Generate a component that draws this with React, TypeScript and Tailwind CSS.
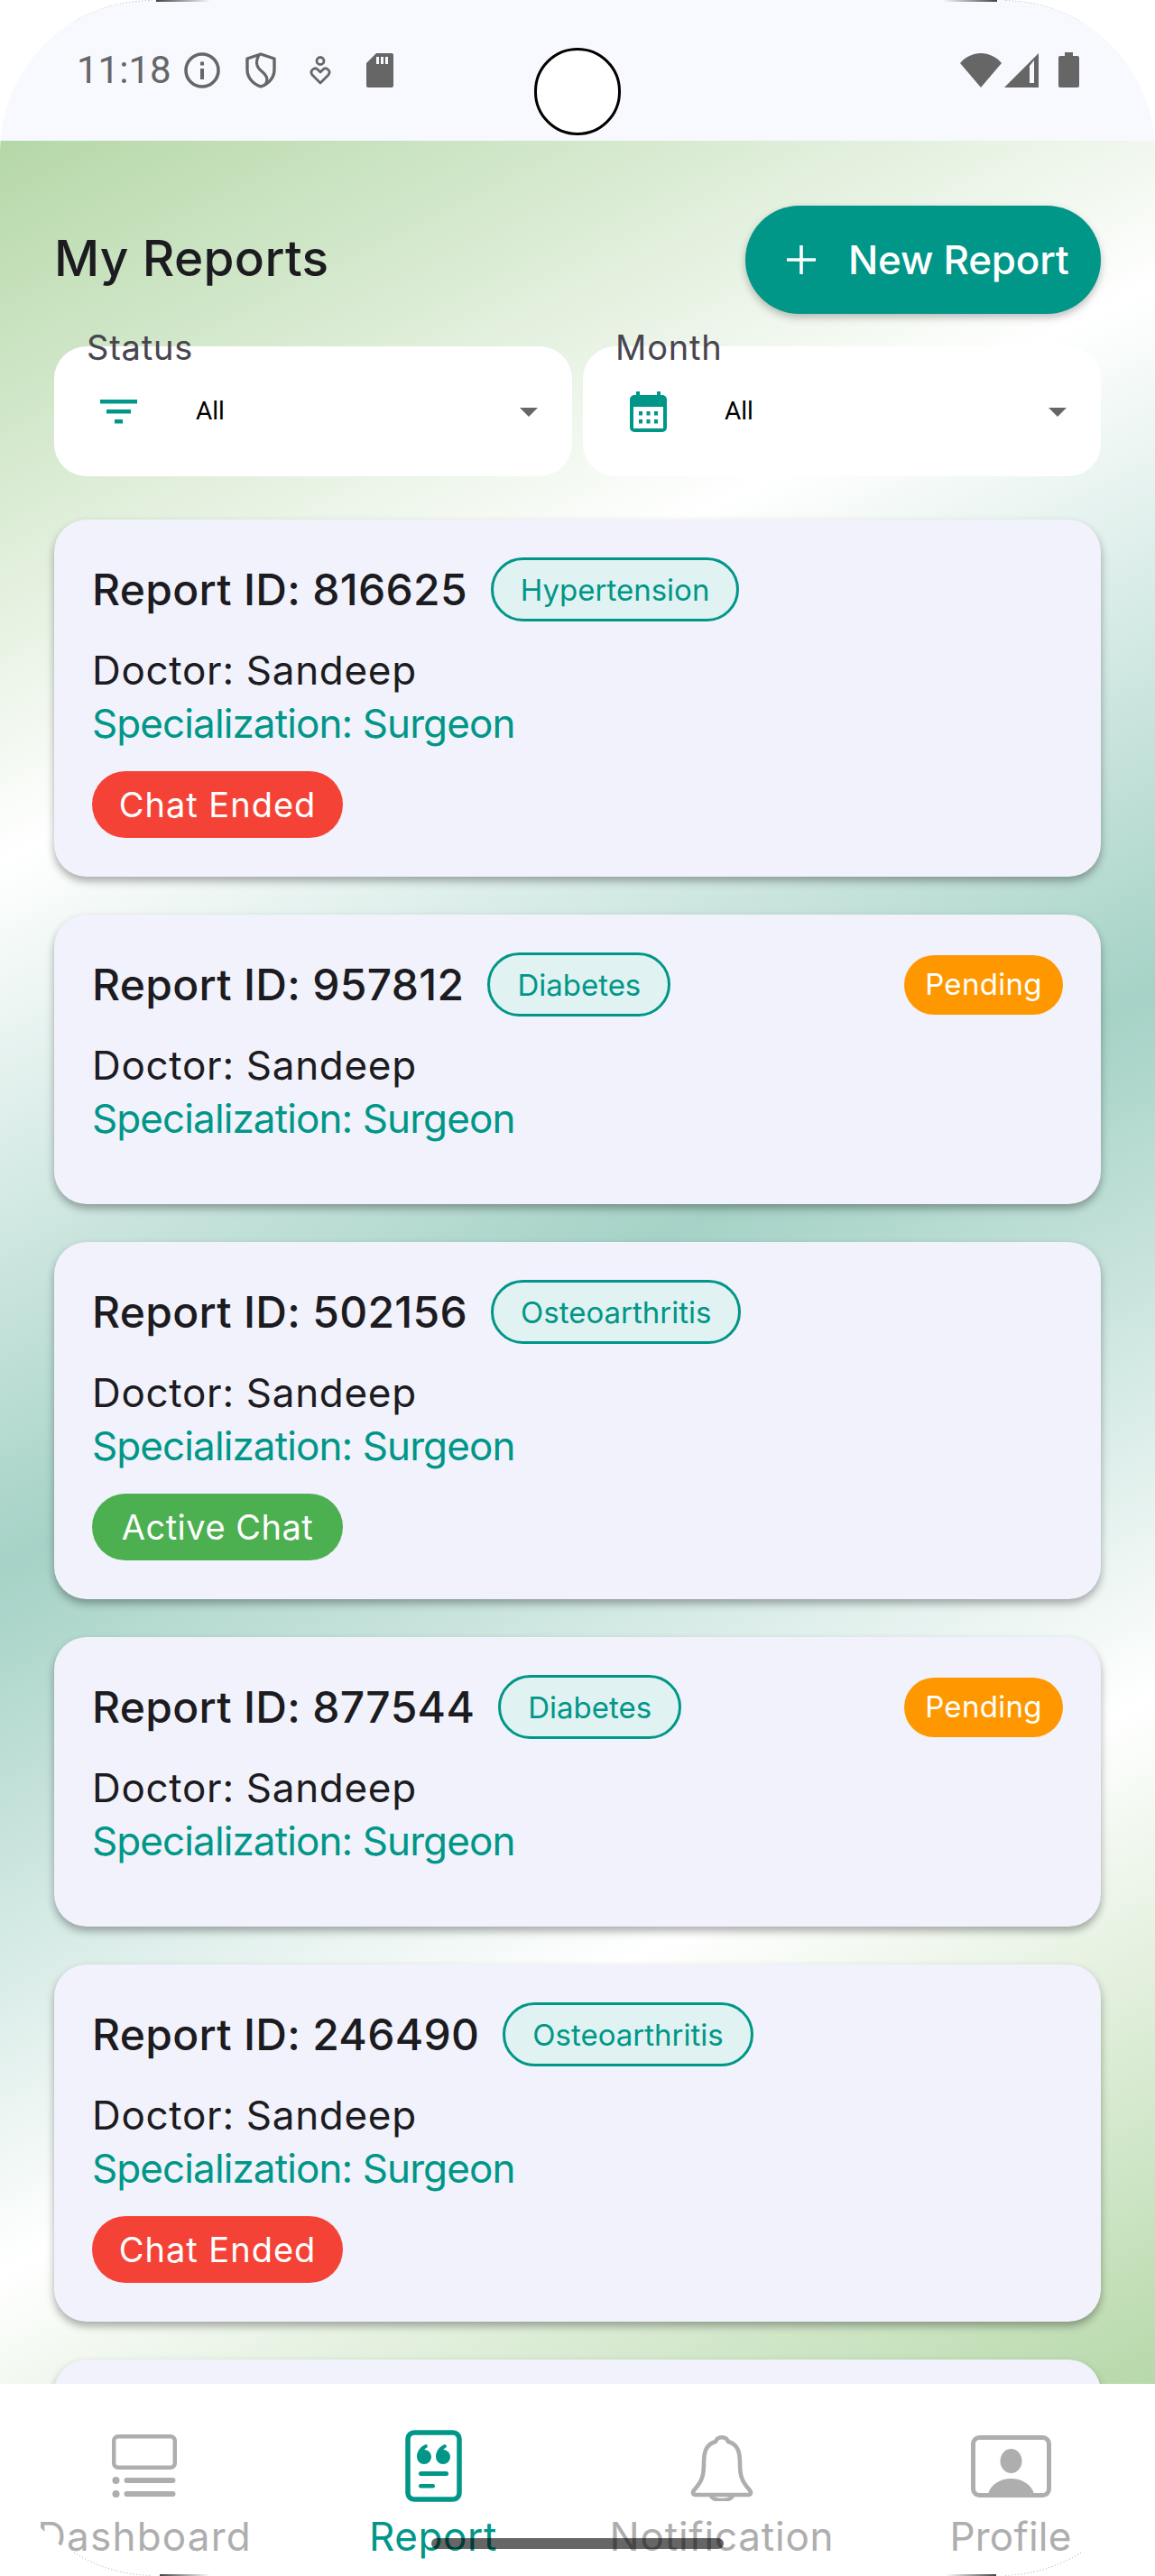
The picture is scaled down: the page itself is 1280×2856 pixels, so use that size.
import React from "react";

const teal = "#009688";

function Info() {
  return (
    <svg width="40" height="40" viewBox="0 0 40 40" className="shrink-0">
      <ellipse cx="20" cy="20" rx="18" ry="18" fill="none" stroke="#666" strokeWidth="3.6" />
      <rect x="18" y="18" width="4" height="12" fill="#666" />
      <rect x="18" y="10.5" width="4" height="4" fill="#666" />
    </svg>
  );
}
function Shield() {
  return (
    <svg width="34" height="40" viewBox="0 0 34 40" className="shrink-0">
      <path d="M17 2 L32 7 V19 C32 28 26 35 17 38 C8 35 2 28 2 19 V7 Z" fill="none" stroke="#666" strokeWidth="3.4" strokeLinejoin="round" />
      <path d="M15 3 C10 12 13 17 18 21 C23 25 26 29 22 36" fill="none" stroke="#666" strokeWidth="3.2" />
    </svg>
  );
}
function PersonHeart() {
  return (
    <svg width="24" height="33" viewBox="0 0 24 33" className="shrink-0">
      <circle cx="12" cy="5.5" r="4" fill="none" stroke="#666" strokeWidth="2.8" />
      <path d="M12 30 L3 21 C-0.5 16 6 12 9 15 L12 18 L15 15 C18 12 24.5 16 21 21 Z" fill="none" stroke="#666" strokeWidth="2.8" strokeLinejoin="round" />
    </svg>
  );
}
function Sd() {
  return (
    <svg width="30" height="38" viewBox="0 0 30 38" className="shrink-0">
      <path d="M11 0 H28 Q30 0 30 2 V36 Q30 38 28 38 H2 Q0 38 0 36 V11 Z" fill="#666" />
      <rect x="11" y="4" width="3" height="8" fill="#f8f9ff" />
      <rect x="16" y="4" width="3" height="8" fill="#f8f9ff" />
      <rect x="21" y="4" width="3" height="8" fill="#f8f9ff" />
    </svg>
  );
}
function Wifi() {
  return (
    <svg width="46" height="38" viewBox="0 0 46 38" className="shrink-0">
      <path d="M23 38 L0 11 C6 4 14 0 23 0 C32 0 40 4 46 11 Z" fill="#666" />
    </svg>
  );
}
function Signal() {
  return (
    <svg width="38" height="38" viewBox="0 0 38 38" className="shrink-0">
      <path d="M38 0 V38 H0 Z" fill="#666" />
      <path d="M28 14 L33 8 V33 H28 Z" fill="#f8f9ff" />
    </svg>
  );
}
function Battery() {
  return (
    <svg width="23" height="39" viewBox="0 0 23 39" className="shrink-0">
      <path d="M7 0 H16 V4 H21 Q23 4 23 6 V37 Q23 39 21 39 H2 Q0 39 0 37 V6 Q0 4 2 4 H7 Z" fill="#666" />
    </svg>
  );
}
function FilterIcon() {
  return (
    <svg width="41" height="27" viewBox="0 0 41 27" className="shrink-0">
      <rect x="0" y="0" width="41" height="4.5" fill={teal} />
      <rect x="7" y="11" width="27" height="4.5" fill={teal} />
      <rect x="16" y="22" width="9" height="4.5" fill={teal} />
    </svg>
  );
}
function CalendarIcon() {
  return (
    <svg width="41" height="45" viewBox="0 0 41 45" className="shrink-0">
      <rect x="7" y="0" width="4" height="7" fill={teal} />
      <rect x="30" y="0" width="4" height="7" fill={teal} />
      <rect x="0" y="4" width="41" height="41" rx="5" fill={teal} />
      <rect x="4" y="17" width="33" height="24" fill="#fff" />
      {[10, 18.5, 27].map((x) =>
        [22, 31].map((y) => <rect key={x + "-" + y} x={x} y={y} width="4" height="4.5" fill={teal} />)
      )}
    </svg>
  );
}
function Caret() {
  return (
    <svg width="20" height="10" viewBox="0 0 20 10" className="shrink-0">
      <path d="M0 0 H20 L10 10 Z" fill="#666" />
    </svg>
  );
}
function DashboardIcon() {
  const c = "#aeaeae";
  return (
    <svg width="72" height="70" viewBox="0 0 72 70">
      <rect x="2.2" y="2.2" width="67.6" height="34.6" rx="5" fill="none" stroke={c} strokeWidth="4.5" />
      <circle cx="4.5" cy="51" r="4" fill={c} />
      <circle cx="4.5" cy="66" r="4" fill={c} />
      <rect x="13.5" y="48" width="57" height="6" rx="3" fill={c} />
      <rect x="13.5" y="63" width="57" height="6" rx="3" fill={c} />
    </svg>
  );
}
function ReportIcon() {
  return (
    <svg width="63" height="80" viewBox="0 0 63 80">
      <rect x="3" y="3" width="57" height="74" rx="7" fill="none" stroke={teal} strokeWidth="5.5" />
      <circle cx="21" cy="30" r="8" fill={teal} />
      <circle cx="42" cy="30" r="8" fill={teal} />
      <path d="M13 30 C13 23 18 17 24 16 L25 19 C21 21 20 24 20 27 Z" fill={teal} />
      <path d="M34 30 C34 23 39 17 45 16 L46 19 C42 21 41 24 41 27 Z" fill={teal} />
      <rect x="15" y="46" width="33" height="5" rx="2.5" fill={teal} />
      <rect x="15" y="60" width="18" height="4.5" rx="2.2" fill={teal} />
    </svg>
  );
}
function BellIcon() {
  const c = "#aeaeae";
  return (
    <svg width="72" height="78" viewBox="0 0 72 78">
      <path d="M29 12 C18 15 16 24 16 36 C16 50 14 56 5 66 Q2 71 8 71 H64 Q70 71 67 66 C58 56 56 50 56 36 C56 24 54 15 43 12 A7.5 7.5 0 0 0 29 12 Z" fill="none" stroke={c} strokeWidth="4.6" strokeLinejoin="round" />
      <path d="M24 71 C24 79 48 79 48 71" fill="none" stroke={c} strokeWidth="4.6" />
    </svg>
  );
}
function ProfileIcon() {
  const c = "#aeaeae";
  return (
    <svg width="89" height="69" viewBox="0 0 89 69">
      <rect x="2.5" y="2.5" width="84" height="64" rx="7" fill="none" stroke={c} strokeWidth="5" />
      <ellipse cx="44.5" cy="28.5" rx="12" ry="13.5" fill={c} />
      <path d="M19 65 C22 54 33 48 44.5 48 C56 48 67 54 70 65 Z" fill={c} />
    </svg>
  );
}

type R = { id: string; tag: string; status: "ended" | "active" | "pending" };
const reports: R[] = [
  { id: "816625", tag: "Hypertension", status: "ended" },
  { id: "957812", tag: "Diabetes", status: "pending" },
  { id: "502156", tag: "Osteoarthritis", status: "active" },
  { id: "877544", tag: "Diabetes", status: "pending" },
  { id: "246490", tag: "Osteoarthritis", status: "ended" },
  { id: "310472", tag: "Diabetes", status: "pending" },
];

function Card({ r }: { r: R }) {
  const withChip = r.status !== "pending";
  return (
    <div className={"shrink-0 rounded-[36px] bg-[#f1f2fb] pl-[42px] pr-[42px] pt-[42px] shadow-[0_5px_10px_rgba(0,0,0,0.32)] " + (withChip ? "pb-[43px]" : "pb-[66px]")}>
      <div className="flex h-[71px] items-center">
        <span className="text-[48px] font-medium leading-none tracking-[0.3px] text-[#1c1b1f]">Report ID: {r.id}</span>
        <span className="ml-[26px] flex h-[71px] items-center rounded-[36px] border-[3px] border-[#009688] bg-[#e0f2f1] px-[30px] pt-[2px] text-[33px] leading-none text-[#009688]">
          {r.tag}
        </span>
        {r.status === "pending" && (
          <span className="ml-auto flex h-[66px] w-[176px] items-center justify-center rounded-[33px] bg-[#ff9800] text-[33px] leading-none tracking-[0.3px] text-white">
            Pending
          </span>
        )}
      </div>
      <div className="mt-[26px] text-[44px] leading-[57px] tracking-[0.7px] text-[#1c1b1f]">Doctor: Sandeep</div>
      <div className="mt-[2px] text-[44px] leading-[57px] tracking-[-0.9px] text-[#009688]">Specialization: Surgeon</div>
      {withChip && (
        <div className={"mt-[24px] flex h-[74px] w-[278px] items-center justify-center rounded-[37px] text-[38px] leading-none text-white " + (r.status === "ended" ? "bg-[#f44336] tracking-[1px]" : "bg-[#4caf50] tracking-[0.5px]")}>
          {r.status === "ended" ? "Chat Ended" : "Active Chat"}
        </div>
      )}
    </div>
  );
}

function Filter({ label, icon, iconBox }: { label: string; icon: React.ReactNode; iconBox: string }) {
  return (
    <div className="relative flex h-[144px] items-center rounded-[36px] bg-white pr-[38px]">
      <span className="absolute left-[36px] top-[-24px] text-[38px] leading-[50px] tracking-[0.8px] text-[#49454f]">{label}</span>
      <div className={"flex w-[157px] items-center " + iconBox}>{icon}</div>
      <span className="font-['Roboto',sans-serif] mt-[-1px] text-[28px] leading-none text-black">All</span>
      <span className="ml-auto mt-[1px] flex"><Caret /></span>
    </div>
  );
}

function NavItem({ label, icon, active, track }: { label: string; icon: React.ReactNode; active?: boolean; track: string }) {
  return (
    <div className="flex flex-col items-center">
      <div className="flex h-[80px] items-center justify-center">{icon}</div>
      <span className={"mt-[8px] text-[44px] leading-[60px] " + track + " " + (active ? "text-[#009688]" : "text-[#aeaeae]")}>{label}</span>
    </div>
  );
}

export default function App() {
  return (
    <div className="relative flex h-[2856px] w-[1280px] flex-col overflow-hidden rounded-[168px] bg-white font-['Inter',sans-serif]">
      <header className="flex h-[156px] shrink-0 items-start bg-[#f8f9ff] pl-[85px] pr-[84px] pt-[58px]">
        <div className="flex items-center">
          <span className="font-['Roboto',sans-serif] text-[42px] leading-[40px] text-[#666]">11:18</span>
          <span className="ml-[14px] flex"><Info /></span>
          <span className="ml-[28px] flex"><Shield /></span>
          <span className="ml-[37px] flex"><PersonHeart /></span>
          <span className="ml-[39px] flex"><Sd /></span>
        </div>
        <div className="ml-auto flex items-center">
          <Wifi />
          <span className="ml-[3px] flex"><Signal /></span>
          <span className="ml-[22px] flex"><Battery /></span>
        </div>
      </header>

      <main className="min-h-0 flex-1 overflow-hidden bg-[linear-gradient(153.4deg,#b5d8a8_0%,#ffffff_25.6%,#a5d2c6_50.6%,#ffffff_75.6%,#b5d8a8_100.6%)] px-[60px] pt-[72px]">
        <div className="flex h-[120px] items-center justify-between">
          <h1 className="mt-[-4px] text-[55px] font-medium leading-none tracking-[0.3px] text-[#1c1b1f]">My Reports</h1>
          <button className="flex h-[120px] w-[394px] items-center rounded-[60px] bg-[#009688] pl-[46px] text-[44px] font-medium leading-none text-white shadow-[0_4px_8px_rgba(0,0,0,0.25)]">
            <svg width="32" height="32" viewBox="0 0 32 32" className="shrink-0">
              <path d="M16 0 V32 M0 16 H32" stroke="#fff" strokeWidth="3.6" />
            </svg>
            <span className="ml-[36px] tracking-[-0.25px]">New Report</span>
          </button>
        </div>

        <div className="mt-[36px] grid grid-cols-2 gap-[12px]">
          <Filter label="Status" icon={<FilterIcon />} iconBox="pl-[51px]" />
          <Filter label="Month" icon={<CalendarIcon />} iconBox="pl-[52px]" />
        </div>

        <div className="mt-[48px] flex flex-col gap-[42px]">
          {reports.map((r) => (
            <Card key={r.id} r={r} />
          ))}
        </div>
      </main>

      <nav className="grid h-[213px] shrink-0 grid-cols-4 bg-white pt-[51px]">
        <NavItem label="Dashboard" icon={<DashboardIcon />} track="tracking-[1.2px]" />
        <NavItem label="Report" icon={<ReportIcon />} active track="tracking-[0.6px]" />
        <NavItem label="Notification" icon={<BellIcon />} track="tracking-[0.8px]" />
        <NavItem label="Profile" icon={<ProfileIcon />} track="tracking-[0.2px]" />
      </nav>

      {/* camera */}
      <div className="absolute left-[592px] top-[53px] h-[97px] w-[96px] rounded-full border-[3px] border-black bg-white" />
      {/* home indicator */}
      <div className="absolute left-[478px] top-[2814px] h-[12px] w-[324px] rounded-full bg-black/60" />
      {/* screen edge artefacts */}
      <svg width="1280" height="2856" viewBox="0 0 1280 2856" className="pointer-events-none absolute left-0 top-0">
        <g fill="none" stroke="#888" strokeWidth="0.8" strokeDasharray="1 2.5">
          <path d="M78 26 A168 168 0 0 1 168 0.5" />
          <path d="M1202 26 A168 168 0 0 0 1112 0.5" />
          <path d="M82 2830 A168 168 0 0 0 168 2855.5" />
          <path d="M1198 2830 A168 168 0 0 1 1112 2855.5" />
        </g>
      </svg>
      <div className="absolute left-[173px] top-0 h-[2px] w-[60px] bg-linear-to-r from-[#444] to-transparent" />
      <div className="absolute left-[1045px] top-0 h-[2px] w-[60px] bg-linear-to-l from-[#444] to-transparent" />
      <div className="absolute left-[177px] bottom-0 h-[2px] w-[56px] bg-linear-to-r from-[#444] to-transparent" />
      <div className="absolute left-[1048px] bottom-0 h-[2px] w-[56px] bg-linear-to-l from-[#444] to-transparent" />
    </div>
  );
}
